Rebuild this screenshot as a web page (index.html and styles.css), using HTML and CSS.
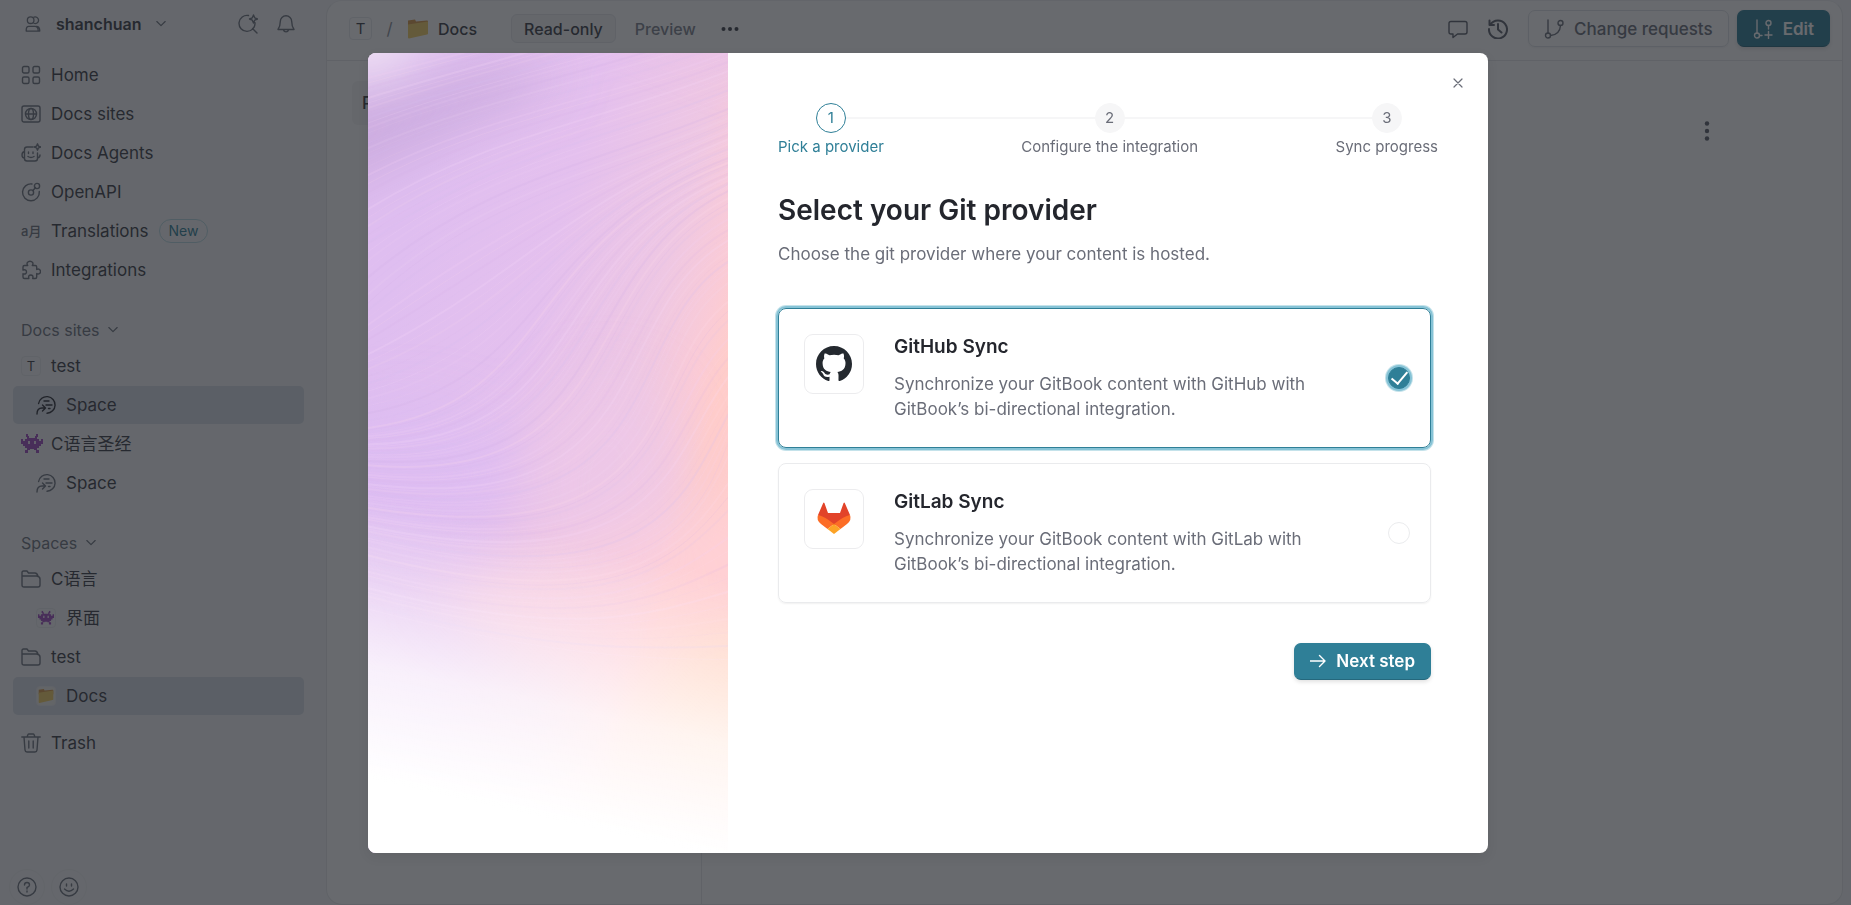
FILE: index.html
```html
<!DOCTYPE html>
<html lang="en">
<head>
<meta charset="utf-8">
<title>Select your Git provider</title>
<link rel="stylesheet" href="styles.css">
</head>
<body>
<svg class="sprite" aria-hidden="true">
  <symbol id="chevron" viewBox="0 0 12 12"><path d="M1 3l5 5 5-5"/></symbol>
  <symbol id="page" viewBox="0 0 20 20"><path d="M2.600 8.500A8.300 8.300 0 1 1 11 18.200M8 6h5M10 10h6M12.500 13.500h1.500M1 19c0-4 2-6 5-6h3M6.500 10l3 3-3 3"/></symbol>
  <symbol id="folder" viewBox="0 0 20 18"><path d="M1 15V2.500Q1 1 2.500 1H6l1.500 2H14q2 0 3 3M1 6h14.500Q19 6.500 19 9v6q0 2-2 2H3q-2 0-2-2z"/></symbol>
  <symbol id="alien" viewBox="0 0 22 20"><g fill="#a04cc0"><path d="M5 0h2v2h1v2h6V2h1V0h2v3h-1v2h2v2h2V5h2v5h-2v2h-2v2h-2v2h2v3h-3v-3h-2v-1h-4v1H7v3H4v-3h2v-2H4v-2H2v-2H0V5h2v2h2V5h2V3H5z"/></g><path d="M7 7h2v3H7zM13 7h2v3h-2z" fill="#efe0f6"/></symbol>
  <symbol id="yfolder" viewBox="0 0 22 21"><path d="M1 2l7-1 1 2 11-1q1 0 1 1v5H1z" fill="#d99a4a"/><path d="M1 6l20-3v12q0 1-1 1L2 20q-1 0-1-1z" fill="#f3cf63"/></symbol>
</svg>

<div class="app">
  <aside class="sidebar">
    <div class="workspace">
      <button class="workspace-name" type="button">
        <svg class="i16" viewBox="0 0 16 17"><circle cx="5.500" cy="4.500" r="3.500"/><path d="M9 1.300a3.500 3.500 0 1 1 0 6.400M3.500 11H10q3.500 0 3.500 4.500v.5H.8v-1q0-4 2.700-4zM11.500 11q3.700 0 3.700 5h-2"/></svg>
        shanchuan
        <svg class="i10" viewBox="0 0 12 12"><use href="#chevron"/></svg>
      </button>
      <div class="workspace-tools">
        <button class="bare" type="button" aria-label="Search"><svg class="i20" viewBox="0 0 20 20"><path d="M10.500 1.500A8 8 0 1 0 17 8.800M14.500 14.500l4.500 4.500M15.500 1l1.200 2.800L19.500 5l-2.800 1.200L15.500 9l-1.200-2.800L11.500 5l2.800-1.200z"/></svg></button>
        <button class="bare" type="button" aria-label="Notifications"><svg class="i20" viewBox="0 0 20 20"><path d="M2 15.500h16q-2.300-3.500-2.300-8a5.700 5.700 0 0 0-11.400 0q0 4.500-2.300 8zM7.500 16a2.600 2.600 0 0 0 5 0"/></svg></button>
      </div>
    </div>

    <nav class="nav" aria-label="Main">
      <a class="row" href="#"><svg class="i20" viewBox="0 0 20 20"><rect x="1.500" y="1.500" width="6.500" height="6.500" rx="1.500"/><rect x="12" y="1.500" width="6.500" height="6.500" rx="1.500"/><rect x="1.500" y="12" width="6.500" height="6.500" rx="1.500"/><rect x="12" y="12" width="6.500" height="6.500" rx="1.500"/></svg>Home</a>
      <a class="row" href="#"><svg class="i20" viewBox="0 0 20 20"><rect x="1" y="2" width="18" height="16" rx="2"/><circle cx="10" cy="10" r="5.500"/><ellipse cx="10" cy="10" rx="2.500" ry="5.500"/><path d="M4.500 10h11"/></svg>Docs sites</a>
      <a class="row" href="#"><svg class="i20" viewBox="0 0 20 20"><path d="M12 4H6Q3.500 4 3.500 6.500v9Q3.500 18 6 18h8q2.500 0 2.500-2.500V10M3.500 8.500Q1 9 1 12t2.500 3M16.500 15Q19 14.500 19 12M7.500 9v1.500M12 9v1.500M7 13.500q3 2 6 0M16.500.8l.9 2.300 2.300.9-2.300.9-.9 2.300-.9-2.300-2.300-.9 2.300-.9z"/></svg>Docs Agents</a>
      <a class="row" href="#"><svg class="i20" viewBox="0 0 20 20"><path d="M11 2a8.400 8.400 0 1 0 7.300 7.500M12 8.500L14.500 5.500"/><circle cx="10" cy="10.500" r="2.600"/><circle cx="16" cy="4" r="2.600"/></svg>OpenAPI</a>
      <a class="row" href="#"><span class="glyph">a月</span>Translations <span class="badge">New</span></a>
      <a class="row" href="#"><svg class="i20" viewBox="0 0 20 20"><path d="M2 7q0-1.500 1.500-1.500h3.200C5 3 7 1.200 9 1.200S13 3 11.300 5.500h2.900q1.500 0 1.500 1.500v2.500c2-1.200 3.800 0 3.800 2s-1.800 3.200-3.800 2V17q0 1.500-1.500 1.500h-2.500c.8-2.600-.4-3.500-1.900-3.500s-2.700.9-1.900 3.500H3.500Q2 18.500 2 17v-3.200c2.500.8 3.500-.5 3.500-1.900S4.500 9.200 2 10z"/></svg>Integrations</a>
    </nav>

    <section class="group">
      <button class="group-title" type="button">Docs sites <svg class="i10" viewBox="0 0 12 12"><use href="#chevron"/></svg></button>
      <a class="row" href="#"><span class="tile">T</span>test</a>
      <a class="row child active" href="#"><svg class="i20" viewBox="0 0 20 20"><use href="#page"/></svg>Space</a>
      <a class="row emoji" href="#"><svg class="i22 art" viewBox="0 0 22 20"><use href="#alien"/></svg>C语言圣经</a>
      <a class="row child" href="#"><svg class="i20" viewBox="0 0 20 20"><use href="#page"/></svg>Space</a>
    </section>

    <section class="group">
      <button class="group-title" type="button">Spaces <svg class="i10" viewBox="0 0 12 12"><use href="#chevron"/></svg></button>
      <a class="row" href="#"><svg class="i20" viewBox="0 0 20 18"><use href="#folder"/></svg>C语言</a>
      <a class="row child" href="#"><span class="tile"><svg class="i16 art" viewBox="0 0 22 20"><use href="#alien"/></svg></span>界面</a>
      <a class="row" href="#"><svg class="i20" viewBox="0 0 20 18"><use href="#folder"/></svg>test</a>
      <a class="row child active" href="#"><span class="tile lit"><svg class="i16 art" viewBox="0 0 22 21"><use href="#yfolder"/></svg></span>Docs</a>
    </section>
    <a class="row trash" href="#"><svg class="i20" viewBox="0 0 20 20"><path d="M.8 4h18.400M6 4l1-2.500Q7.200 1 8 1h4q.8 0 1 .5L14 4M3 4l1 13q.2 2 2 2h8q1.800 0 2-2l1-13M7.800 8v7M12.200 8v7"/></svg>Trash</a>

    <div class="sidebar-foot">
      <button class="round" type="button" aria-label="Help"><svg class="i20" viewBox="0 0 20 20"><circle cx="10" cy="10" r="9"/><path d="M7.500 8q0-2.500 2.500-2.500T12.500 8q0 1.500-2.500 2.500v1.500M10 14v1"/></svg></button>
      <button class="round" type="button" aria-label="Feedback"><svg class="i20" viewBox="0 0 20 20"><circle cx="10" cy="10" r="9"/><path d="M7.500 7v2M12.500 7v2M5.500 12q4.500 4.500 9 0"/></svg></button>
    </div>
  </aside>

  <main class="main">
    <header class="topbar">
      <span class="tile big">T</span>
      <span class="slash">/</span>
      <a class="crumb" href="#"><svg class="i22 art" viewBox="0 0 22 21"><use href="#yfolder"/></svg>Docs</a>
      <div class="tabs">
        <button class="tab on" type="button">Read-only</button>
        <button class="tab" type="button">Preview</button>
        <button class="bare" type="button" aria-label="More"><svg class="i18 dots" viewBox="0 0 18 18"><circle cx="2.500" cy="9" r="2"/><circle cx="9" cy="9" r="2"/><circle cx="15.500" cy="9" r="2"/></svg></button>
      </div>
      <div class="actions">
        <button class="bare" type="button" aria-label="Comments"><svg class="i20" viewBox="0 0 20 20"><path d="M3 2.500h14q2 0 2 2V13q0 2-2 2H9.500L5 18.500V15H3q-2 0-2-2V4.500q0-2 2-2z"/></svg></button>
        <button class="bare" type="button" aria-label="History"><svg class="i20 heavy" viewBox="0 0 20 20"><path d="M2.500 5.500A9 9 0 1 1 1 10M1.500 1.500v4.500H6M10 5v5.500l3.500 3"/></svg></button>
        <button class="btn" type="button"><svg class="i20" viewBox="0 0 20 20"><path d="M4 1v13.500M6.500 16.500Q16 15.500 16.500 6.500"/><circle cx="4" cy="16.500" r="2.500"/><circle cx="16.500" cy="4" r="2.500"/></svg>Change requests</button>
        <button class="btn primary" type="button"><svg class="i20" viewBox="0 0 20 20"><path d="M4 1v13.500M6.500 16.500H9M15.500 6.500V10M15.500 12.500v7M12 16h7"/><circle cx="4" cy="16.500" r="2.500"/><circle cx="15.500" cy="4" r="2.500"/></svg>Edit</button>
      </div>
    </header>
    <div class="body">
      <div class="toc"><a class="toc-item" href="#">Page</a></div>
      <div class="doc"><button class="bare" type="button" aria-label="Page options"><svg class="i20 dots" viewBox="0 0 20 20"><circle cx="10" cy="2.500" r="2.200"/><circle cx="10" cy="10" r="2.200"/><circle cx="10" cy="17.500" r="2.200"/></svg></button></div>
    </div>
  </main>
</div>

<div class="backdrop">
  <div class="modal" role="dialog" aria-modal="true" aria-labelledby="modal-title">
    <svg class="cover" viewBox="0 0 360 800" preserveAspectRatio="none" aria-hidden="true">
      <defs>
        <linearGradient id="base" gradientUnits="userSpaceOnUse" x1="40" y1="180" x2="370" y2="270">
          <stop offset="0" stop-color="#dfbef0"/><stop offset=".42" stop-color="#e4c0ee"/><stop offset=".75" stop-color="#eec7e3"/><stop offset=".92" stop-color="#facbd6"/><stop offset="1" stop-color="#ffcdca"/>
        </linearGradient>
        <linearGradient id="fade" gradientUnits="userSpaceOnUse" x1="150" y1="475" x2="90" y2="745">
          <stop offset="0" stop-color="#fff" stop-opacity="0"/><stop offset=".3" stop-color="#fff" stop-opacity=".35"/><stop offset=".6" stop-color="#fff" stop-opacity=".76"/><stop offset="1" stop-color="#fff"/>
        </linearGradient>
        <filter id="soft" x="-50%" y="-50%" width="200%" height="200%"><feGaussianBlur stdDeviation="26"/></filter>
      </defs>
      <rect width="360" height="800" fill="url(#base)"/>
      <g filter="url(#soft)">
        <path d="M-60 60L140 10 200 20-60 150z" fill="#c4a6d8" opacity=".75"/>
        <path d="M-60-40H90L-10 30z" fill="#f3eaf4"/>
        <path d="M200-60H400V20z" fill="#e6bdee" opacity=".6"/>
        <ellipse cx="40" cy="420" rx="110" ry="70" fill="#dcbcf4" opacity=".6"/>
        <ellipse cx="240" cy="430" rx="80" ry="110" fill="#ecc8e8" opacity=".7"/>
        <path d="M60 540L400 440 400 660 200 640z" fill="#ffd2dc" opacity=".6"/>
        <ellipse cx="370" cy="660" rx="90" ry="90" fill="#ffd9b8" opacity=".6"/>
      </g>
      <g id="strands"></g>
      <rect width="360" height="800" fill="url(#fade)"/>
    </svg>
    <div class="content">
      <button class="close" type="button" aria-label="Close"><svg class="i12" viewBox="0 0 12 12"><path d="M2 2l8 8M10 2l-8 8"/></svg></button>
      <ol class="steps">
        <li class="step current"><span class="num">1</span>Pick a provider</li>
        <li class="step"><span class="num">2</span>Configure the integration</li>
        <li class="step"><span class="num">3</span>Sync progress</li>
      </ol>
      <form class="form">
        <h1 class="title" id="modal-title">Select your Git provider</h1>
        <p class="lead">Choose the git provider where your content is hosted.</p>
        <div class="cards">
          <label class="card">
            <span class="logo"><svg class="mark" viewBox="0 0 16 16"><path fill="#24292f" d="M8 0C3.580 0 0 3.580 0 8c0 3.540 2.290 6.530 5.470 7.590.4.070.55-.17.55-.38 0-.19-.01-.82-.01-1.490-2.010.37-2.530-.49-2.690-.94-.09-.23-.48-.94-.82-1.130-.28-.15-.68-.52-.01-.53.63-.01 1.080.58 1.230.82.72 1.210 1.870.87 2.330.66.07-.52.28-.87.51-1.070-1.780-.2-3.640-.89-3.640-3.950 0-.87.31-1.590.82-2.150-.08-.2-.36-1.020.08-2.120 0 0 .67-.21 2.200.82.64-.18 1.320-.27 2-.27s1.360.09 2 .27c1.530-1.040 2.200-.82 2.200-.82.44 1.100.16 1.920.08 2.120.51.56.82 1.270.82 2.150 0 3.070-1.870 3.750-3.650 3.950.29.25.54.73.54 1.480 0 1.070-.01 1.930-.01 2.200 0 .21.15.46.55.38A8.010 8.010 0 0 0 16 8c0-4.420-3.580-8-8-8z"/></svg></span>
            <span class="card-text"><span class="card-title">GitHub Sync</span><span class="card-desc">Synchronize your GitBook content with GitHub with GitBook’s bi-directional integration.</span></span>
            <input class="radio" type="radio" name="provider" checked>
          </label>
          <label class="card">
            <span class="logo"><svg class="mark" viewBox="0 0 36 36"><path fill="#e24329" d="M2 14L7.200 2q.6-1 1.200 0L12 12h12l3.600-10q.6-1 1.200 0L34 14l-7 10H9z"/><path fill="#fc6d26" d="M2 14q6 1 16 9l-6.500 5L5 23Q0 19 2 14zM34 14q-6 1-16 9l6.500 5L31 23q5-4 3-9z"/><path fill="#fca326" d="M18 23l6.500 5L18 33l-6.500-5z"/></svg></span>
            <span class="card-text"><span class="card-title">GitLab Sync</span><span class="card-desc">Synchronize your GitBook content with GitLab with GitBook’s bi-directional integration.</span></span>
            <input class="radio" type="radio" name="provider">
          </label>
        </div>
        <button class="btn primary next" type="button"><svg class="i16" viewBox="0 0 16 16"><path d="M0 8h15M9.500 2.500L15 8l-5.500 5.500"/></svg>Next step</button>
      </form>
    </div>
  </div>
</div>
<script src="strands.js"></script>
</body>
</html>
```

FILE: strands.js
```js
// Fine strands of the cover artwork, interpolated between key curves.
const keys = [
  [0, 20, 120, -10, 240, -40, 360, -90],
  [0, 105, 120, 50, 240, 35, 360, -10],
  [0, 250, 120, 140, 220, 130, 360, 70],
  [0, 375, 190, 350, 150, 190, 360, 110],
  [0, 410, 260, 430, 200, 220, 360, 140],
  [0, 450, 330, 500, 260, 300, 360, 230],
  [0, 490, 280, 560, 330, 470, 360, 390],
  [0, 560, 150, 600, 250, 615, 360, 620]
];
const group = document.getElementById('strands');
const tones = ['#f9dcf8', '#d3b0e6', '#f6d4f4', '#d8bcf0', '#ffdcec'];
const perBand = 17;
for (let k = 0; k < keys.length - 1; k++) {
  for (let n = 0; n < perBand; n++) {
    const t = n / perBand;
    const p = keys[k].map((v, i) => v + (keys[k + 1][i] - v) * t);
    const line = document.createElementNS('http://www.w3.org/2000/svg', 'path');
    line.setAttribute('d', `M${p[0]} ${p[1]}C${p.slice(2).join(' ')}`);
    line.setAttribute('fill', 'none');
    line.setAttribute('stroke', tones[(k * 3 + n * 7) % 5]);
    line.setAttribute('stroke-width', 1 + (n * 5 + k) % 2);
    line.setAttribute('opacity', 0.08 + ((n * 3 + k) % 4) * 0.04);
    group.append(line);
  }
}
```

FILE: styles.css
```css
* { box-sizing: border-box; }
body {
  margin: 0;
  height: 100vh;
  overflow: hidden;
  font-family: Inter, "Noto Sans CJK SC", sans-serif;
  font-size: 17px;
  line-height: 24px;
  color: #3b3e46;
  background: #f6f7f8;
}
button { font: inherit; color: inherit; cursor: pointer; padding: 0; border: 0; background: none; }
a { color: inherit; text-decoration: none; }
svg { fill: none; stroke: currentColor; stroke-width: 1.400; stroke-linecap: round; stroke-linejoin: round; flex: none; display: block; }
.sprite { position: absolute; width: 0; height: 0; }
.i10 { width: 10px; height: 10px; }
.i12 { width: 12px; height: 12px; }
.i16 { width: 16px; height: 16px; }
.i18 { width: 18px; height: 18px; }
.i20 { width: 20px; height: 20px; }
.i22 { width: 22px; height: 22px; }
.art, .mark, .cover { stroke: none; }
.dots { fill: currentColor; stroke: none; }
.heavy { stroke-width: 2; }

.app { display: flex; height: 100vh; padding-right: 8px; }
.sidebar { width: 326px; flex: none; display: flex; flex-direction: column; padding: 0 22px 0 13px; }
.sidebar svg { color: #6c727d; }
.workspace { display: flex; justify-content: space-between; align-items: center; height: 48px; margin-bottom: 8px; padding: 0 8px 0 12px; }
.workspace-name { display: flex; align-items: center; gap: 15px; font-weight: 600; font-size: 16px; }
.workspace-tools { display: flex; gap: 18px; }
.nav { display: flex; flex-direction: column; gap: 1px; }
.row { display: flex; align-items: center; gap: 10px; height: 38px; padding: 0 8px; border-radius: 5px; }
.emoji { gap: 8px; }
.child { padding-left: 23px; }
.row.active { background: #d9dde6; }
.row.active > svg { color: #2a2d34; }
.glyph { width: 20px; font-size: 13px; font-weight: 500; line-height: 20px; color: #6c727d; white-space: nowrap; }
.badge { font-size: 14px; line-height: 22px; padding: 0 9px; border: 1px solid #b8d9e2; border-radius: 12px; color: #2f7f97; }
.group { display: flex; flex-direction: column; gap: 1px; margin-top: 24px; }
.group-title { display: flex; align-items: center; gap: 9px; height: 33px; padding: 0 8px; font-size: 16px; color: #6c727d; }
.tile { display: grid; place-items: center; width: 20px; height: 20px; border: 1px solid #e8e9ec; border-radius: 4px; font-size: 13px; line-height: 18px; }
.tile.big { width: 23px; height: 23px; font-size: 15px; }
.tile.lit { background: #f0efea; }
.trash { margin-top: 9px; }
.sidebar-foot { display: flex; gap: 6px; margin-top: auto; margin-left: -4px; }
.round { display: grid; place-items: center; width: 36px; height: 36px; border: 1px solid #eeeff1; border-radius: 50%; }

.main { flex: 1; min-width: 0; display: flex; flex-direction: column; background: #fff; border: 1px solid #e6e8eb; border-top-color: #eff0f2; border-radius: 16px; }
.topbar { display: flex; align-items: center; height: 60px; padding: 0 12px 4px 22px; border-bottom: 1px solid #e6e8eb; }
.slash { width: 35px; text-align: center; color: #8a8f99; }
.crumb { display: flex; align-items: center; gap: 9px; font-weight: 500; font-size: 16px; }
.tabs { display: flex; align-items: center; gap: 6px; margin-left: 34px; }
.tab { height: 29px; padding: 0 12px; border: 1px solid transparent; border-radius: 6px; font-weight: 500; font-size: 16px; color: #7d828c; }
.tab.on { color: #3b3e46; background: #f5f6f7; border-color: #e6e8eb; }
.tabs .bare { margin-left: 6px; }
.actions { display: flex; align-items: center; gap: 20px; margin-left: auto; color: #5a5f69; }
.btn { display: flex; align-items: center; gap: 10px; height: 37px; padding: 0 15px; border: 1px solid #dfe2e6; border-radius: 7px; font-weight: 500; box-shadow: 0 1px 2px #0000000d; white-space: nowrap; }
.btn.primary { color: #fff; background: #2f7f97; border-color: #2f7f97; border-bottom-color: #25687d; font-weight: 600; box-shadow: 0 2px 4px #0000001f; }
.actions .btn { color: #6a6f7a; }
.actions .primary { color: #fff; margin-left: -12px; }
.body { flex: 1; display: flex; }
.toc { width: 375px; padding: 20px 25px; border-right: 1px solid #e6e8eb; }
.toc-item { display: block; padding: 10px; border-radius: 6px; background: #f5f6f7; font-weight: 500; }
.doc { flex: 1; display: flex; justify-content: flex-end; align-items: flex-start; padding: 60px 125px; }
.doc .bare { color: #5a5f69; }

.backdrop { position: fixed; inset: 0; display: grid; place-items: center; padding: 0 0 0 5px; background: #1d1f25aa; }
.modal { display: flex; width: min(1120px, 94vw); height: min(800px, 94vh); background: #fff; border-radius: 8px; overflow: hidden; box-shadow: 0 4px 12px #00000014; }
.cover { width: 360px; height: 100%; }
.content { flex: 1; min-width: 0; padding: 20px 50px; color: #6a6d78; }
.close { display: grid; place-items: center; width: 20px; height: 20px; margin: 0 -30px 10px auto; }
.close svg { stroke-width: 1.200; }
.steps { position: relative; display: flex; justify-content: space-between; margin: 0 0 38px; padding: 0; list-style: none; font-size: 15px; line-height: 18px; }
.steps::before { content: ""; position: absolute; left: 50px; right: 50px; top: 14px; height: 2px; background: #f6f6f7; }
.step { position: relative; display: flex; flex-direction: column; align-items: center; gap: 5px; }
.num { display: grid; place-items: center; width: 30px; height: 30px; border: 1px solid #f6f6f7; border-radius: 50%; background: #f6f6f7; font-size: 15px; line-height: 20px; }
.current { color: #2f7f97; }
.current .num { background: #fff; border-color: #2f7f97; }
.form { display: flex; flex-direction: column; margin-right: 7px; }
.title { margin: 0 0 16px; font-size: 28px; line-height: 32px; font-weight: 600; color: #24262d; }
.lead { margin: 0 0 42px; }
.cards { display: flex; flex-direction: column; gap: 15px; }
.card { display: flex; align-items: center; gap: 30px; min-height: 140px; padding: 25px 20px 25px 25px; border: 1px solid #eaebed; border-radius: 8px; box-shadow: 0 1px 2px #0000000f; cursor: pointer; }
.card:has(:checked) { border-color: #2f7f97; box-shadow: 0 0 0 2px #86c3d6, 0 0 0 3px #c4e2ea; }
.logo { display: grid; place-items: center; align-self: flex-start; flex: none; width: 60px; height: 60px; border: 1px solid #ececee; border-radius: 9px; }
.mark { width: 36px; height: 36px; }
.card-text { flex: 1; display: flex; flex-direction: column; align-self: flex-start; gap: 12px; }
.card-title { font-size: 19px; line-height: 26px; font-weight: 600; color: #24262d; }
.card-desc { line-height: 25px; }
.radio { appearance: none; flex: none; width: 22px; height: 22px; margin: 0; border: 1px solid #eaebed; border-radius: 50%; background: #fff; }
.radio:checked { display: grid; place-items: center; border-color: #2f7f97; background: #2f7f97; box-shadow: 0 0 0 2px #86c3d6, 0 0 0 3px #c4e2ea; }
.radio:checked::before { content: ""; width: 7px; height: 14px; margin-top: -4px; border: solid #fff; border-width: 0 2px 2px 0; transform: rotate(40deg); }
.next { align-self: flex-end; margin-top: 40px; }
```
